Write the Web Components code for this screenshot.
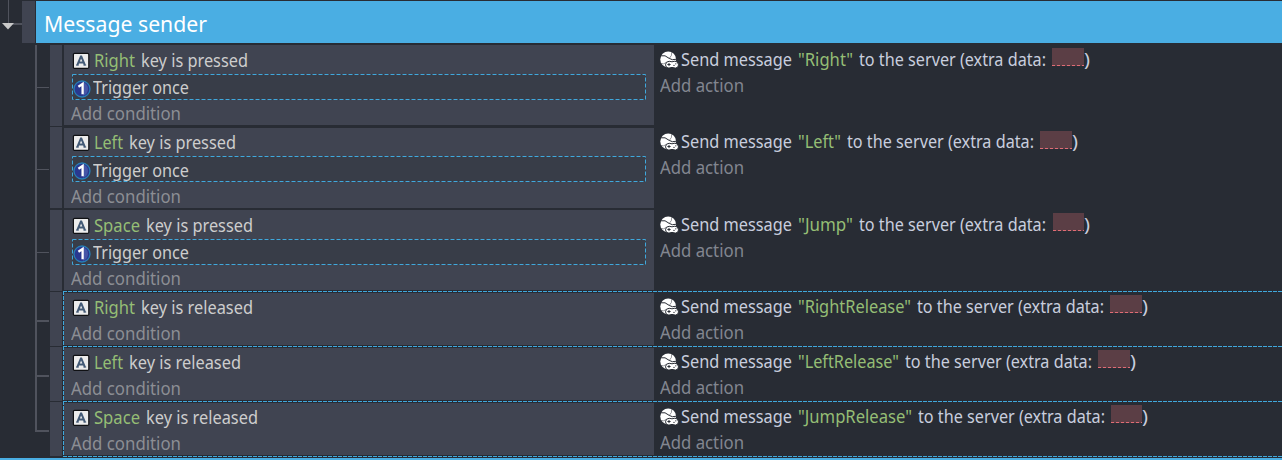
<!DOCTYPE html>
<html lang="en">
<head>
<meta charset="utf-8">
<title>Message sender</title>
<style>
body{margin:0;background:#282c34;overflow:hidden}
</style>
</head>
<body>
<event-sheet></event-sheet>
<script>
// Text run that occupies a fixed advance width
class TextRun extends HTMLElement {
  connectedCallback() {
    const root = this.attachShadow({mode: 'open'});
    root.innerHTML = `<style>:host{display:inline-block;white-space:pre;flex:none}
      span{display:inline-block;transform-origin:0 50%}</style><span><slot></slot></span>`;
    const w = +this.getAttribute('w');
    const s = root.querySelector('span');
    const natural = s.getBoundingClientRect().width;
    this.style.width = w + 'px';
    s.style.transform = `scaleX(${w / natural})`;
  }
}

class KeyIcon extends HTMLElement {
  constructor() {
    super();
    this.attachShadow({mode: 'open'}).innerHTML = `<style>:host{display:block;width:18px;height:18px;flex:none}svg{display:block}</style>
    <svg width="18" height="18" viewBox="0 0 18 18"><rect x="1.4" y="1.4" width="15.4" height="15" rx="1.2" fill="#ececec" stroke="#101114" stroke-width="1.2"/>
    <path d="M5.3 13.2 8.9 4.4H9.3L12.9 13.2M6.5 10.6H11.7" fill="none" stroke="#435a76" stroke-width="2"/><path d="M4 13.1H6.7M11.5 13.1H14.2" stroke="#435a76" stroke-width="1"/></svg>`;
  }
}

class OnceIcon extends HTMLElement {
  constructor() {
    super();
    this.attachShadow({mode: 'open'}).innerHTML = `<style>:host{display:block;width:18px;height:18px;flex:none}svg{display:block}</style>
    <svg width="18" height="18" viewBox="0 0 18 18"><circle cx="9" cy="9" r="8" fill="#29388f" stroke="#287eb6" stroke-width="1.3"/>
    <path d="M10 2.3A7 7 0 0 1 10 15.7Z" fill="#4656a7"/>
    <path d="M5.4 6.8 9.6 4V14.2" fill="none" stroke="#fff" stroke-width="2.3"/></svg>`;
  }
}

class NetIcon extends HTMLElement {
  constructor() {
    super();
    this.attachShadow({mode: 'open'}).innerHTML = `<style>:host{display:block;width:19px;height:18px;flex:none}svg{display:block}</style>
    <svg width="19" height="18" viewBox="0 0 19 18"><circle cx="8.2" cy="8.4" r="7.9" fill="#fff"/>
    <path d="M0 4.8Q5.5 3.5 9.2 7.4Q12 9.6 16.5 8.2" fill="none" stroke="#282c34" stroke-width="1"/>
    <path d="M9.4 7.2Q12.2 4.8 11.7 1.1M1 12.4Q3.8 13.6 6 11.6" fill="none" stroke="#282c34" stroke-width=".5"/>
    <path d="M9.2 10.3Q5.6 10.3 5.5 13.8Q5.6 17.1 8.9 17.1L12 16.4L15.4 17.1Q18.6 16.8 18.5 13.8Q18.1 10.2 14.9 10.2L12 10.8Z" fill="#fff" stroke="#282c34" stroke-width="1"/>
    <path d="M7.4 13.5H10.6M9 11.9V15.1" stroke="#282c34" stroke-width="1"/><circle cx="14" cy="14.4" r=".65" fill="#282c34"/><circle cx="15.8" cy="12.8" r=".65" fill="#282c34"/></svg>`;
  }
}

class GroupHeader extends HTMLElement {
  constructor() {
    super();
    this.attachShadow({mode: 'open'}).innerHTML = `<style>
    :host{display:grid;grid-template-columns:22px 13px 1fr;column-gap:0;height:43px;box-sizing:border-box;padding-top:1px}
    .handle{background:#404451;height:42px}
    .bar{margin-left:1px;height:42px;background:#4aaee3;color:#fff;font:22.5px/45px "Noto Sans","Open Sans",sans-serif;padding-left:8px}
    svg{display:block;margin-top:-1px}</style>
    <svg width="22" height="43"><path d="M8.5 0V23" stroke="#50535d"/><path d="M12 24H22" stroke="#50535d" stroke-width="2"/><path d="M2 23H14L8 29.5Z" fill="#c9c9c9"/></svg>
    <div class="handle"></div><div class="bar"><text-run w="163"><slot></slot></text-run></div>`;
  }
}

class EventRow extends HTMLElement {
  connectedCallback() {
    const g = n => this.getAttribute(n), once = this.hasAttribute('once');
    this.attachShadow({mode: 'open'}).innerHTML = `<style>
    :host{display:grid;grid-template-columns:15px 12px 1px 1fr;height:${g('h')}px;font:17.4px/26px "Noto Sans","Open Sans",sans-serif}
    .branch{height:${once ? 1 : 2}px;margin:${g('branch')}px 1px 0 0;background:#50535d}
    .handle{background:#404451;margin-top:${g('gap') || 1}px}
    .body{display:grid;grid-template-columns:590px 1fr;margin-left:1px}
    .frame{display:grid;grid-column:4;position:relative}
    .dash{display:block;position:absolute;left:0;top:0;pointer-events:none}
    .cond{background:#404451;margin-top:2px;height:${once ? 80 : 52}px;padding:0 8px 0 7.5px;box-sizing:border-box;color:#cdcdcd}
    .line{display:flex;align-items:center;height:26px}
    .cond .first{align-items:flex-start;height:${once ? 27 : 26}px;padding:${g('cp')}px 0 0 1px}
    .cond key-icon{margin:5px 4px 0 -.5px}
    .once{box-sizing:border-box;height:26px;background:#383d48;margin:0 0 ${g('op') || 0}px .5px;position:relative}
    .once svg{position:absolute;inset:0}
    .once text-run{margin-left:2.5px;position:relative;top:${g('op') || 0}px}
    once-icon{margin-top:3px;margin-left:.5px;position:relative}
    .add{color:#8c8e94}
    .cond .add text-run{margin-left:-.5px}
    .act{color:#c8cede;padding:${g('ap')}px 0 0 5.5px}
    .act .line:first-child{height:27px;margin-left:-.5px}
    .act .add{color:#828690;height:25px}
    .green{color:#95be75}
    text-run{height:26px}
    .extra{width:${g('bw') || 32}px;height:18px;background:linear-gradient(90deg,#e06c75 67%,transparent 0) 0 100%/5px 1px repeat-x,#5b3e45;flex:none;margin-top:${g('bt') || -4}px}
    </style>
    <div class="branch"></div><div class="handle"></div>
    <div class="frame"><div class="body">
      <div class="cond">
        <div class="line first"><key-icon></key-icon><text-run class="green" w="${g('kw')}">${g('key')}</text-run><text-run style="margin-left:6px" w="${g('sw')}">key is ${g('state')}</text-run></div>
        ${once ? `<div class="line once"><svg width="574" height="26"><rect x=".5" y=".5" width="573" height="25" fill="none" stroke="#40a8dc" stroke-dasharray="4 2"/></svg><once-icon></once-icon><text-run w="96">Trigger once</text-run></div>` : ''}
        <div class="line add"><text-run w="110">Add condition</text-run></div>
      </div>
      <div class="act">
        <div class="line"><net-icon style="margin:1.5px 2px 0 1px"></net-icon><text-run w="111">Send message</text-run><text-run class="green" style="margin-left:6px" w="${g('mw')}">"${g('msg')}"</text-run><text-run style="margin-left:6px" w="187">to the server (extra data:</text-run><div class="extra" style="margin-left:${g('bl') || 6}px"></div><text-run w="6">)</text-run></div>
        <div class="line add"><text-run w="84">Add action</text-run></div>
      </div>
    </div>${once ? '' : `<svg class="dash" width="1219" height="55"><path d="M0 .5H1219M.5 0V55" fill="none" stroke="#40a8dc" stroke-dasharray="4 1"/></svg>`}</div>`;
  }
}

class EventSheet extends HTMLElement {
  constructor() {
    super();
    this.attachShadow({mode: 'open'}).innerHTML = `<style>
    :host{display:block;width:1282px;height:460px;background:#282c34;overflow:hidden}
    .rows{margin-left:35px;background:linear-gradient(#50535d,#50535d) 0 2px/2px 387px no-repeat}
    .end{height:1px;margin-left:63px;background:repeating-linear-gradient(90deg,#40a8dc 0 4px,transparent 4px 5px)}
    .next{margin-top:1px;height:2px;background:#4aaee3}
    </style>
    <group-header>Message sender</group-header>
    <div class="rows">
      <event-row once h="83" branch="44" gap="2" cp="2" ap="2.5" key="Right" kw="41" state="pressed" sw="107" msg="Right" mw="55"></event-row>
      <event-row once h="82" branch="43" cp="1" op="1" ap="1.5" bt="-2" key="Left" kw="29" state="pressed" sw="107" msg="Left" mw="43"></event-row>
      <event-row once h="83" branch="44" gap="2" cp="2" ap="2.5" key="Space" kw="46" state="pressed" sw="107" msg="Jump" mw="55" bl="7" bw="31"></event-row>
      <event-row h="55" branch="29" cp="1" ap="1.5" key="Right" kw="41" state="released" sw="112" msg="RightRelease" mw="113"></event-row>
      <event-row h="55" branch="29" cp="1" ap="1.5" key="Left" kw="29" state="released" sw="112" msg="LeftRelease" mw="101"></event-row>
      <event-row h="55" branch="29" cp="1" ap="1.5" key="Space" kw="46" state="released" sw="112" msg="JumpRelease" mw="114" bw="31"></event-row>
    </div>
    <div class="end"></div><div class="next"></div>`;
  }
}
customElements.define('text-run', TextRun);
customElements.define('key-icon', KeyIcon);
customElements.define('once-icon', OnceIcon);
customElements.define('net-icon', NetIcon);
customElements.define('group-header', GroupHeader);
customElements.define('event-row', EventRow);
customElements.define('event-sheet', EventSheet);
</script>
</body>
</html>
